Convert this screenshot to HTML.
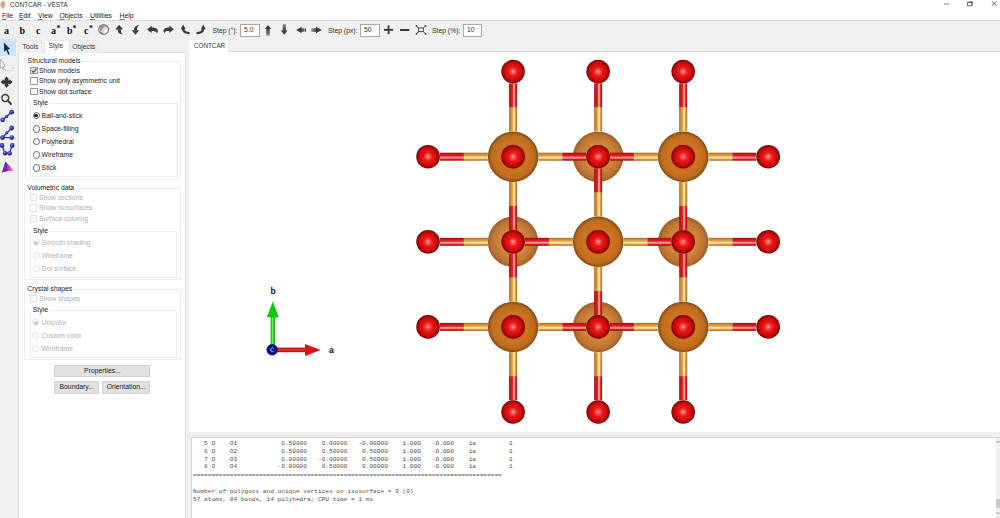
<!DOCTYPE html>
<html><head><meta charset="utf-8">
<style>
*{margin:0;padding:0;box-sizing:border-box}
html,body{width:1000px;height:518px;overflow:hidden;background:#f0f0f0;font-family:"Liberation Sans",sans-serif;color:#222}
.a{position:absolute;white-space:nowrap}
#title{left:0;top:0;width:1000px;height:10px;background:#fff}
#menu{left:0;top:10px;width:1000px;height:11px;background:#fff;border-bottom:1px solid #dadada}
.t{font-size:6.8px;line-height:8px}
.u{text-decoration:underline;text-decoration-thickness:0.6px;text-decoration-color:#777}
#tb{left:0;top:21px;width:1000px;height:18px;background:#f0f0f0}
.tl{font-family:"Liberation Serif",serif;font-weight:bold;font-size:10px;color:#111;line-height:10px}
.inp{background:#fff;border:1px solid #a8a8a8;font-size:6.8px;line-height:10px;padding-left:3px;color:#333}
#strip{left:0;top:39px;width:17px;height:479px;background:#f0f0f0}
#panel{left:17.5px;top:52px;width:168px;height:470px;background:#fff;border:1px solid #dedede}
.tab{top:40px;height:13px;background:#f0f0f0;border:1px solid #e8e8e8;border-bottom:none;font-size:6.8px;line-height:12px;text-align:center;color:#333}
.grp{border:1px solid #dcdcdc}
.cb{width:7px;height:7px;border:1px solid #555;background:#fff}
.rd{width:7px;height:7px;border:1px solid #444;border-radius:50%;background:#fff}
.dis,.pt.dis{color:#b0b0b0}
.cbd{border-color:#bdbdbd}
.btn{background:#e1e1e1;border:1px solid #d2d2d2;font-size:6.8px;line-height:10px;text-align:center;color:#222}
#view{left:190px;top:51px;width:810px;height:381px;background:#fff;border-top:1px solid #dadada}
#log{left:191px;top:437px;width:809px;height:81px;background:#fff;border-left:1px solid #d8d8d8;border-top:1px solid #d8d8d8}
.pt{font-size:6.8px;line-height:8px;color:#1a1a1a}
pre.a{white-space:pre}
pre{font-family:"Liberation Mono",monospace;font-size:6.13px;line-height:8px;color:#505050}
</style></head><body>
<div id="title" class="a"></div>
<div class="a t" style="left:10px;top:1px;font-size:6.4px;color:#333">CONTCAR - VESTA</div>

<div id="menu" class="a"></div>
<div class="a t" style="left:2px;top:12px"><span class="u">F</span>ile</div>
<div class="a t" style="left:19px;top:12px"><span class="u">E</span>dit</div>
<div class="a t" style="left:38px;top:12px"><span class="u">V</span>iew</div>
<div class="a t" style="left:59.5px;top:12px"><span class="u">O</span>bjects</div>
<div class="a t" style="left:90px;top:12px"><span class="u">U</span>tilities</div>
<div class="a t" style="left:119.5px;top:12px"><span class="u">H</span>elp</div>

<div id="tb" class="a"></div>
<div class="a tl" style="left:4px;top:26.2px">a</div>
<div class="a tl" style="left:19.5px;top:26.2px">b</div>
<div class="a tl" style="left:36px;top:26.2px">c</div>
<div class="a tl" style="left:51px;top:26.2px">a</div><div class="a tl" style="left:56.5px;top:24px;font-size:8px">*</div>
<div class="a tl" style="left:67px;top:26.2px">b</div><div class="a tl" style="left:72.5px;top:24px;font-size:8px">*</div>
<div class="a tl" style="left:84px;top:26.2px">c</div><div class="a tl" style="left:89px;top:24px;font-size:8px">*</div>

<div class="a t" style="left:212.5px;top:26.5px;color:#333">Step (°):</div>
<div class="a inp" style="left:240px;top:24px;width:20px;height:13px">5.0</div>
<div class="a t" style="left:328px;top:26.5px;color:#333">Step (px):</div>
<div class="a inp" style="left:360px;top:24px;width:20px;height:13px">50</div>
<div class="a t" style="left:432px;top:26.5px;color:#333">Step (%):</div>
<div class="a inp" style="left:463px;top:24px;width:19px;height:13px">10</div>

<div id="strip" class="a"></div>
<div class="a" style="left:0;top:39px;width:16px;height:17px;background:#cce4f7"></div>

<div id="panel" class="a"></div>
<div class="a tab" style="left:19px;width:23px">Tools</div>
<div class="a tab" style="left:43.5px;width:26.5px;top:39.5px;height:14px;background:#fff;line-height:10px;text-align:left;padding-left:4.3px;font-size:6.4px">Style</div>
<div class="a tab" style="left:70px;width:27.5px">Objects</div>

<div id="view" class="a"></div>
<div class="a" style="left:189px;top:39.5px;width:39px;height:12.5px;background:#fff;font-size:6.3px;line-height:12px;padding-left:5px;color:#333">CONTCAR</div>
<div id="log" class="a"></div>
<!--MOL--><svg class="a" style="left:0;top:0" width="1000" height="518" viewBox="0 0 1000 518">
<defs>
<radialGradient id="gO" cx="50%" cy="50%" r="50%">
<stop offset="0" stop-color="#ffb0b0"/><stop offset="0.15" stop-color="#ff5a5a"/><stop offset="0.38" stop-color="#ea1818"/><stop offset="0.7" stop-color="#d00c0c"/><stop offset="0.88" stop-color="#a80606"/><stop offset="1" stop-color="#700303"/></radialGradient>
<radialGradient id="gF" cx="50%" cy="50%" r="50%">
<stop offset="0" stop-color="#d07820"/><stop offset="0.42" stop-color="#b8661a"/><stop offset="0.55" stop-color="#cc7420"/><stop offset="0.85" stop-color="#c06c1e"/><stop offset="0.95" stop-color="#9a5618"/><stop offset="1" stop-color="#7a4818"/></radialGradient>
<radialGradient id="gB" cx="50%" cy="50%" r="50%">
<stop offset="0" stop-color="#d68c42"/><stop offset="0.55" stop-color="#cf843a"/><stop offset="0.85" stop-color="#bb7232"/><stop offset="1" stop-color="#9a5e28"/></radialGradient>
<linearGradient id="rH" x1="0" y1="0" x2="0" y2="1"><stop offset="0" stop-color="#a01010"/><stop offset="0.2" stop-color="#cc1616"/><stop offset="0.42" stop-color="#dc2424"/><stop offset="0.55" stop-color="#f49090"/><stop offset="0.68" stop-color="#f49090"/><stop offset="0.82" stop-color="#d41c1c"/><stop offset="1" stop-color="#a01010"/></linearGradient>
<linearGradient id="rV" x1="0" y1="0" x2="1" y2="0"><stop offset="0" stop-color="#a01010"/><stop offset="0.2" stop-color="#cc1616"/><stop offset="0.42" stop-color="#dc2424"/><stop offset="0.55" stop-color="#f49090"/><stop offset="0.68" stop-color="#f49090"/><stop offset="0.82" stop-color="#d41c1c"/><stop offset="1" stop-color="#a01010"/></linearGradient>
<linearGradient id="oH" x1="0" y1="0" x2="0" y2="1"><stop offset="0" stop-color="#a86a24"/><stop offset="0.2" stop-color="#cc8a34"/><stop offset="0.42" stop-color="#e4aa4c"/><stop offset="0.55" stop-color="#f8dc98"/><stop offset="0.68" stop-color="#f8dc98"/><stop offset="0.82" stop-color="#d89838"/><stop offset="1" stop-color="#a86a20"/></linearGradient>
<linearGradient id="oV" x1="0" y1="0" x2="1" y2="0"><stop offset="0" stop-color="#a86a24"/><stop offset="0.2" stop-color="#cc8a34"/><stop offset="0.42" stop-color="#e4aa4c"/><stop offset="0.55" stop-color="#f8dc98"/><stop offset="0.68" stop-color="#f8dc98"/><stop offset="0.82" stop-color="#d89838"/><stop offset="1" stop-color="#a86a20"/></linearGradient>
</defs>
<circle cx="598.13" cy="156.70" r="25.2" fill="url(#gB)"/>
<circle cx="513.09" cy="241.80" r="25.2" fill="url(#gB)"/>
<circle cx="683.17" cy="241.80" r="25.2" fill="url(#gB)"/>
<circle cx="598.13" cy="326.90" r="25.2" fill="url(#gB)"/>
<rect x="463.87" y="152.70" width="24.02" height="8.0" fill="url(#oH)"/>
<rect x="439.85" y="152.70" width="24.02" height="8.0" fill="url(#rH)"/>
<rect x="538.29" y="152.70" width="24.02" height="8.0" fill="url(#oH)"/>
<rect x="562.31" y="152.70" width="24.02" height="8.0" fill="url(#rH)"/>
<rect x="509.09" y="107.45" width="8.0" height="24.05" fill="url(#oV)"/>
<rect x="509.09" y="83.40" width="8.0" height="24.05" fill="url(#rV)"/>
<rect x="509.09" y="181.90" width="8.0" height="24.05" fill="url(#oV)"/>
<rect x="509.09" y="205.95" width="8.0" height="24.05" fill="url(#rV)"/>
<rect x="594.13" y="107.45" width="8.0" height="24.05" fill="url(#oV)"/>
<rect x="594.13" y="83.40" width="8.0" height="24.05" fill="url(#rV)"/>
<rect x="633.95" y="152.70" width="24.02" height="8.0" fill="url(#oH)"/>
<rect x="609.93" y="152.70" width="24.02" height="8.0" fill="url(#rH)"/>
<rect x="708.37" y="152.70" width="24.02" height="8.0" fill="url(#oH)"/>
<rect x="732.39" y="152.70" width="24.02" height="8.0" fill="url(#rH)"/>
<rect x="679.17" y="107.45" width="8.0" height="24.05" fill="url(#oV)"/>
<rect x="679.17" y="83.40" width="8.0" height="24.05" fill="url(#rV)"/>
<rect x="679.17" y="181.90" width="8.0" height="24.05" fill="url(#oV)"/>
<rect x="679.17" y="205.95" width="8.0" height="24.05" fill="url(#rV)"/>
<rect x="463.87" y="237.80" width="24.02" height="8.0" fill="url(#oH)"/>
<rect x="439.85" y="237.80" width="24.02" height="8.0" fill="url(#rH)"/>
<rect x="548.91" y="237.80" width="24.02" height="8.0" fill="url(#oH)"/>
<rect x="524.89" y="237.80" width="24.02" height="8.0" fill="url(#rH)"/>
<rect x="623.33" y="237.80" width="24.02" height="8.0" fill="url(#oH)"/>
<rect x="647.35" y="237.80" width="24.02" height="8.0" fill="url(#rH)"/>
<rect x="594.13" y="192.55" width="8.0" height="24.05" fill="url(#oV)"/>
<rect x="594.13" y="168.50" width="8.0" height="24.05" fill="url(#rV)"/>
<rect x="594.13" y="267.00" width="8.0" height="24.05" fill="url(#oV)"/>
<rect x="594.13" y="291.05" width="8.0" height="24.05" fill="url(#rV)"/>
<rect x="708.37" y="237.80" width="24.02" height="8.0" fill="url(#oH)"/>
<rect x="732.39" y="237.80" width="24.02" height="8.0" fill="url(#rH)"/>
<rect x="463.87" y="322.90" width="24.02" height="8.0" fill="url(#oH)"/>
<rect x="439.85" y="322.90" width="24.02" height="8.0" fill="url(#rH)"/>
<rect x="538.29" y="322.90" width="24.02" height="8.0" fill="url(#oH)"/>
<rect x="562.31" y="322.90" width="24.02" height="8.0" fill="url(#rH)"/>
<rect x="509.09" y="277.65" width="8.0" height="24.05" fill="url(#oV)"/>
<rect x="509.09" y="253.60" width="8.0" height="24.05" fill="url(#rV)"/>
<rect x="509.09" y="352.10" width="8.0" height="24.05" fill="url(#oV)"/>
<rect x="509.09" y="376.15" width="8.0" height="24.05" fill="url(#rV)"/>
<rect x="594.13" y="352.10" width="8.0" height="24.05" fill="url(#oV)"/>
<rect x="594.13" y="376.15" width="8.0" height="24.05" fill="url(#rV)"/>
<rect x="633.95" y="322.90" width="24.02" height="8.0" fill="url(#oH)"/>
<rect x="609.93" y="322.90" width="24.02" height="8.0" fill="url(#rH)"/>
<rect x="708.37" y="322.90" width="24.02" height="8.0" fill="url(#oH)"/>
<rect x="732.39" y="322.90" width="24.02" height="8.0" fill="url(#rH)"/>
<rect x="679.17" y="277.65" width="8.0" height="24.05" fill="url(#oV)"/>
<rect x="679.17" y="253.60" width="8.0" height="24.05" fill="url(#rV)"/>
<rect x="679.17" y="352.10" width="8.0" height="24.05" fill="url(#oV)"/>
<rect x="679.17" y="376.15" width="8.0" height="24.05" fill="url(#rV)"/>
<circle cx="513.09" cy="156.70" r="25.2" fill="url(#gF)"/>
<circle cx="683.17" cy="156.70" r="25.2" fill="url(#gF)"/>
<circle cx="598.13" cy="241.80" r="25.2" fill="url(#gF)"/>
<circle cx="513.09" cy="326.90" r="25.2" fill="url(#gF)"/>
<circle cx="683.17" cy="326.90" r="25.2" fill="url(#gF)"/>
<circle cx="513.09" cy="156.70" r="11.8" fill="url(#gO)"/>
<circle cx="598.13" cy="156.70" r="11.8" fill="url(#gO)"/>
<circle cx="683.17" cy="156.70" r="11.8" fill="url(#gO)"/>
<circle cx="513.09" cy="241.80" r="11.8" fill="url(#gO)"/>
<circle cx="598.13" cy="241.80" r="11.8" fill="url(#gO)"/>
<circle cx="683.17" cy="241.80" r="11.8" fill="url(#gO)"/>
<circle cx="513.09" cy="326.90" r="11.8" fill="url(#gO)"/>
<circle cx="598.13" cy="326.90" r="11.8" fill="url(#gO)"/>
<circle cx="683.17" cy="326.90" r="11.8" fill="url(#gO)"/>
<circle cx="428.05" cy="156.70" r="11.8" fill="url(#gO)"/>
<circle cx="428.05" cy="241.80" r="11.8" fill="url(#gO)"/>
<circle cx="428.05" cy="326.90" r="11.8" fill="url(#gO)"/>
<circle cx="768.21" cy="156.70" r="11.8" fill="url(#gO)"/>
<circle cx="768.21" cy="241.80" r="11.8" fill="url(#gO)"/>
<circle cx="768.21" cy="326.90" r="11.8" fill="url(#gO)"/>
<circle cx="513.09" cy="71.60" r="11.8" fill="url(#gO)"/>
<circle cx="598.13" cy="71.60" r="11.8" fill="url(#gO)"/>
<circle cx="683.17" cy="71.60" r="11.8" fill="url(#gO)"/>
<circle cx="513.09" cy="412.00" r="11.8" fill="url(#gO)"/>
<circle cx="598.13" cy="412.00" r="11.8" fill="url(#gO)"/>
<circle cx="683.17" cy="412.00" r="11.8" fill="url(#gO)"/>
</svg><!--/MOL-->
<!--PANEL--><div class="a" style="left:24.5px;top:60.5px;width:156.5px;height:119.0px;border:1px solid #ededed;border-radius:1px"></div>
<div class="a pt" style="left:26.6px;top:56.9px;background:#fff;padding:0 1px;color:#222">Structural models</div>
<div class="a" style="left:30.4px;top:66.7px;width:7.2px;height:7.2px;border:1px solid #9a9a9a;background:#e2e2e2"></div>
<svg class="a" style="left:30.4px;top:66.7px;overflow:visible" width="8" height="8" viewBox="0 0 8 8"><path d="M1.6,3.4 L3.4,5.3 L6.4,1.6" stroke="#505050" stroke-width="1.1" fill="none"/></svg>
<div class="a pt " style="left:39px;top:66.6px;">Show models</div>
<div class="a" style="left:30.4px;top:77.4px;width:7.2px;height:7.2px;border:1px solid #9a9a9a;background:#fff"></div>
<div class="a pt " style="left:39px;top:77.3px;">Show only asymmetric unit</div>
<div class="a" style="left:30.4px;top:87.8px;width:7.2px;height:7.2px;border:1px solid #9a9a9a;background:#fff"></div>
<div class="a pt " style="left:39px;top:87.7px;">Show dot surface</div>
<div class="a" style="left:29.5px;top:103px;width:148.0px;height:73.5px;border:1px solid #eaeaea;border-radius:1px"></div>
<div class="a pt" style="left:32px;top:99.1px;background:#fff;padding:0 1px;color:#222">Style</div>
<div class="a" style="left:32.6px;top:111.8px;width:7.2px;height:7.2px;border:1px solid #666;border-radius:50%;background:#fff"></div>
<div class="a" style="left:34.4px;top:113.6px;width:3.6px;height:3.6px;border-radius:50%;background:#222"></div>
<div class="a pt " style="left:41.6px;top:111.7px;">Ball-and-stick</div>
<div class="a" style="left:32.6px;top:125.4px;width:7.2px;height:7.2px;border:1px solid #666;border-radius:50%;background:#fff"></div>
<div class="a pt " style="left:41.6px;top:125.3px;">Space-filling</div>
<div class="a" style="left:32.6px;top:137.9px;width:7.2px;height:7.2px;border:1px solid #666;border-radius:50%;background:#fff"></div>
<div class="a pt " style="left:41.6px;top:137.8px;">Polyhedral</div>
<div class="a" style="left:32.6px;top:151.4px;width:7.2px;height:7.2px;border:1px solid #666;border-radius:50%;background:#fff"></div>
<div class="a pt " style="left:41.6px;top:151.3px;">Wireframe</div>
<div class="a" style="left:32.6px;top:164.4px;width:7.2px;height:7.2px;border:1px solid #666;border-radius:50%;background:#fff"></div>
<div class="a pt " style="left:41.6px;top:164.3px;">Stick</div>
<div class="a" style="left:24px;top:188px;width:157px;height:92px;border:1px solid #ededed;border-radius:1px"></div>
<div class="a pt" style="left:26.3px;top:184.2px;background:#fff;padding:0 1px;color:#222">Volumetric data</div>
<div class="a" style="left:30.1px;top:193.8px;width:7.2px;height:7.2px;border:1px solid #e2e2e2;background:#fff"></div>
<div class="a pt dis" style="left:39px;top:193.7px;">Show sections</div>
<div class="a" style="left:30.1px;top:204.4px;width:7.2px;height:7.2px;border:1px solid #e2e2e2;background:#fff"></div>
<div class="a pt dis" style="left:39px;top:204.3px;">Show isosurfaces</div>
<div class="a" style="left:30.1px;top:215.0px;width:7.2px;height:7.2px;border:1px solid #e2e2e2;background:#fff"></div>
<div class="a pt dis" style="left:39px;top:214.9px;">Surface coloring</div>
<div class="a" style="left:29.5px;top:230.7px;width:147.5px;height:47.30000000000001px;border:1px solid #ededed;border-radius:1px"></div>
<div class="a pt" style="left:32px;top:226.8px;background:#fff;padding:0 1px;color:#222">Style</div>
<div class="a" style="left:32.6px;top:239.2px;width:7.2px;height:7.2px;border:1px solid #e2e2e2;border-radius:50%;background:#fff"></div>
<div class="a" style="left:34.4px;top:241.0px;width:3.6px;height:3.6px;border-radius:50%;background:#d0d0d0"></div>
<div class="a pt dis" style="left:41.5px;top:239.1px;">Smooth shading</div>
<div class="a" style="left:32.6px;top:252.2px;width:7.2px;height:7.2px;border:1px solid #e2e2e2;border-radius:50%;background:#fff"></div>
<div class="a pt dis" style="left:41.5px;top:252.1px;">Wireframe</div>
<div class="a" style="left:32.6px;top:265.1px;width:7.2px;height:7.2px;border:1px solid #e2e2e2;border-radius:50%;background:#fff"></div>
<div class="a pt dis" style="left:41.5px;top:265.0px;">Dot surface</div>
<div class="a" style="left:24px;top:289px;width:157px;height:71px;border:1px solid #ededed;border-radius:1px"></div>
<div class="a pt" style="left:26.3px;top:285.1px;background:#fff;padding:0 1px;color:#222">Crystal shapes</div>
<div class="a" style="left:29.9px;top:294.9px;width:7.2px;height:7.2px;border:1px solid #e2e2e2;background:#fff"></div>
<div class="a pt dis" style="left:39.3px;top:294.8px;">Show shapes</div>
<div class="a" style="left:29.5px;top:310.2px;width:147.5px;height:47.60000000000002px;border:1px solid #ededed;border-radius:1px"></div>
<div class="a pt" style="left:31.799999999999997px;top:306.3px;background:#fff;padding:0 1px;color:#222">Style</div>
<div class="a" style="left:32.2px;top:319.3px;width:7.2px;height:7.2px;border:1px solid #e2e2e2;border-radius:50%;background:#fff"></div>
<div class="a" style="left:34.0px;top:321.1px;width:3.6px;height:3.6px;border-radius:50%;background:#d0d0d0"></div>
<div class="a pt dis" style="left:41.6px;top:319.2px;">Unicolor</div>
<div class="a" style="left:32.2px;top:332.0px;width:7.2px;height:7.2px;border:1px solid #e2e2e2;border-radius:50%;background:#fff"></div>
<div class="a pt dis" style="left:41.6px;top:331.9px;">Custom color</div>
<div class="a" style="left:32.2px;top:345.2px;width:7.2px;height:7.2px;border:1px solid #e2e2e2;border-radius:50%;background:#fff"></div>
<div class="a pt dis" style="left:41.6px;top:345.1px;">Wireframe</div>
<div class="a btn" style="left:54.4px;top:365.2px;width:96.1px;height:11.800000000000011px;line-height:9.800000000000011px">Properties...</div>
<div class="a btn" style="left:54.4px;top:381.2px;width:44.6px;height:12.400000000000034px;line-height:10.400000000000034px">Boundary...</div>
<div class="a btn" style="left:101.9px;top:381.2px;width:48.599999999999994px;height:12.400000000000034px;line-height:10.400000000000034px">Orientation...</div><!--/PANEL-->
<!--ICONS--><svg class="a" style="left:0;top:0" width="500" height="180" viewBox="0 0 500 180">
<defs><radialGradient id="bb" cx="40%" cy="35%" r="60%"><stop offset="0" stop-color="#8c8cf0"/><stop offset="0.5" stop-color="#3a3ac0"/><stop offset="1" stop-color="#1e1e80"/></radialGradient>
<linearGradient id="shU" x1="0" y1="0" x2="0" y2="1"><stop offset="0" stop-color="#3a3a3a"/><stop offset="1" stop-color="#8a8a8a"/></linearGradient>
<linearGradient id="shD" x1="0" y1="1" x2="0" y2="0"><stop offset="0" stop-color="#3a3a3a"/><stop offset="1" stop-color="#8a8a8a"/></linearGradient>
<linearGradient id="shL" x1="0" y1="0" x2="1" y2="0"><stop offset="0" stop-color="#3a3a3a"/><stop offset="1" stop-color="#9a9a9a"/></linearGradient>
<linearGradient id="shR" x1="1" y1="0" x2="0" y2="0"><stop offset="0" stop-color="#3a3a3a"/><stop offset="1" stop-color="#9a9a9a"/></linearGradient>
<linearGradient id="pm" x1="0" y1="0" x2="1" y2="1"><stop offset="0" stop-color="#3030a0"/><stop offset="0.5" stop-color="#c030c0"/><stop offset="1" stop-color="#ff70c0"/></linearGradient>
</defs>
<g fill="#3c3c3c">
<!-- globe -->
<circle cx="103.6" cy="29.5" r="4.9" fill="#d6d6d6" stroke="#777" stroke-width="1.1"/>
<path d="M100.5,27 C101.5,25.5 104,25.2 105.5,26.3 C104.5,27.5 103,27 102.5,28.5 C102,30 101,31.5 100,30.5 Z" fill="#8a8a8a"/>
<path d="M104.5,29 C106,28.5 107.8,29.5 107.5,31 C106.5,32.5 105.5,33.5 104,33.8 C104.5,32 103.8,30 104.5,29 Z" fill="#f2f2f2"/>
<path d="M100,31.5 C101.5,32 102.5,33 103,34 C101.5,34 100.5,33 100,31.5 Z" fill="#666"/>
<!-- up curl -->
<path d="M115.2,29.6 L119.25,24.8 L123.1,29.6 Z"/>
<path d="M117.7,29.3 C117.5,32.2 119.2,34.4 122.9,34.4 C121.2,33.4 120.7,31.5 120.8,29.3 Z"/>
<!-- down curl -->
<path d="M131.75,30.3 L139.2,30.3 L135.5,34.7 Z"/>
<path d="M134,30.6 C133.9,27.6 135.6,25.3 139,25.3 C137.3,26.3 136.9,28.4 137,30.6 Z"/>
<!-- undo -->
<path d="M147,29.4 L151.7,25.8 L151.7,27.6 C155.2,27.4 158.1,28.7 157.9,31.6 L156.9,33.4 C156.6,31.6 154.6,30.9 151.7,31.1 L151.7,32.9 Z"/>
<!-- redo -->
<path d="M173.8,29.3 L169.3,25.5 L169.3,27.4 C165.9,27.3 163.3,28.6 163.5,31.4 L164.4,33.1 C164.8,31.4 166.6,30.8 169.3,31 L169.3,32.9 Z"/>
<!-- ccw -->
<path d="M180.7,29.2 L183.1,24.6 L185.6,29.2 Z"/>
<path d="M183.1,28.6 C183.1,31.6 185.4,33.1 189.6,33.1" fill="none" stroke="#3c3c3c" stroke-width="2.3"/>
<!-- cw -->
<path d="M200.8,29.2 L203.2,24.6 L205.7,29.2 Z"/>
<path d="M203.2,28.6 C203.2,31.6 200.9,33.1 196.6,33.1" fill="none" stroke="#3c3c3c" stroke-width="2.3"/>
<!-- straight up -->
<path d="M264.8,28.9 L268,25 L271.3,28.9 Z"/>
<rect x="266.3" y="28.5" width="3.4" height="7.1" fill="url(#shU)"/>
<!-- straight down -->
<rect x="282.7" y="24.2" width="3.2" height="6.8" fill="url(#shD)"/>
<path d="M280.8,30.6 L287.6,30.6 L284.3,34.7 Z"/>
<!-- left -->
<path d="M296.2,30 L301.6,26.8 L301.6,33.2 Z"/>
<rect x="301.2" y="28.3" width="1.6" height="3.5"/>
<rect x="303.2" y="28.3" width="1.1" height="3.5"/>
<rect x="304.9" y="28.3" width="1.1" height="3.5"/>
<!-- right -->
<rect x="311.2" y="28.3" width="5.2" height="3.5" fill="url(#shR)"/>
<path d="M321.8,30 L316,26.8 L316,33.2 Z"/>
<!-- plus minus -->
<rect x="384" y="28.9" width="9.2" height="1.9"/>
<rect x="387.6" y="25.4" width="1.9" height="8.8"/>
<rect x="400" y="29" width="9.3" height="1.9" rx="0.5"/>
<!-- fit -->
<rect x="418.5" y="28" width="4.8" height="3.6" fill="none" stroke="#3c3c3c" stroke-width="0.9"/>
<path d="M416.5,25.8 L418.8,28.2 M425.5,25.8 L423.2,28.2 M416.5,33.8 L418.8,31.4 M425.5,33.8 L423.2,31.4" stroke="#3c3c3c" stroke-width="0.9"/>
<circle cx="416.5" cy="25.8" r="0.9"/><circle cx="425.5" cy="25.8" r="0.9"/><circle cx="416.5" cy="33.8" r="0.9"/><circle cx="425.5" cy="33.8" r="0.9"/>
</g>
<!-- left strip -->
<path d="M3.8,42.5 L4.2,52 L6.3,49.9 L8.3,54.7 L9.7,54.1 L7.7,49.4 L10.2,49.1 Z" fill="#1c2c3e"/>
<path d="M0.3,59 L0.3,68.5 L2,67 L3.2,70 L4.2,69.5 L3,66.6 L5.3,66.4 Z" fill="#fafafa" stroke="#9a9a9a" stroke-width="0.7"/>
<path d="M5,70.5 L13,70.5 M13,70.5 L13,66" stroke="#b0b0b0" stroke-width="0.8" stroke-dasharray="1,1" fill="none"/>
<g fill="#333">
<path d="M6.6,76.4 L9.3,79.4 L8,79.4 L8,80.6 L9.6,80.6 L9.6,79.3 L12.6,82 L9.6,84.8 L9.6,83.4 L8,83.4 L8,84.8 L9.3,84.8 L6.6,87.8 L3.9,84.8 L5.2,84.8 L5.2,83.4 L3.6,83.4 L3.6,84.8 L0.6,82 L3.6,79.3 L3.6,80.6 L5.2,80.6 L5.2,79.4 L3.9,79.4 Z"/><circle cx="6.6" cy="82" r="2.6"/></g>
<circle cx="5.3" cy="98" r="3.4" fill="none" stroke="#3c3c3c" stroke-width="1.5"/>
<path d="M7.8,100.5 L11,104" stroke="#3c3c3c" stroke-width="1.9" stroke-linecap="round"/>
<g stroke="#3a3ab0" stroke-width="1.4" fill="none">
<path d="M2.5,120 L11.5,112.2"/>
<path d="M2.5,137.6 L11.8,128 M2.5,137.6 L11.8,137.6"/>
<path d="M2,145.5 L5,153 L9.5,153 L12.2,145.5"/>
</g>
<g fill="url(#bb)">
<circle cx="2.6" cy="119.8" r="2.4"/><circle cx="6.6" cy="116.4" r="1.7"/><circle cx="11.6" cy="112.2" r="2.4"/>
<circle cx="11.6" cy="128" r="2.4"/><circle cx="2.5" cy="137.6" r="2.4"/><circle cx="11.8" cy="137.6" r="2.4"/><circle cx="6.8" cy="132.7" r="1.5"/>
<circle cx="2" cy="145.4" r="2.3"/><circle cx="5.1" cy="153.2" r="2.3"/><circle cx="9.6" cy="153.2" r="2.3"/><circle cx="12.2" cy="145.4" r="2.3"/>
</g>
<path d="M5.5,161.5 L2,172.5 L8,171 L13.5,170.5 L9.5,166 Z" fill="url(#pm)"/>
<path d="M5.5,161.5 L8,171 L2,172.5 Z" fill="#5a2ab0" opacity="0.8"/>
</svg>
<!--/ICONS-->
<!--LOG--><pre class="a" style="left:193px;top:440.3px">   5 O    O1            0.50000    0.00000   -0.00000    1.000   -0.000    1a         1</pre>
<pre class="a" style="left:193px;top:448.0px">   6 O    O2            0.50000    0.50000    0.50000    1.000   -0.000    1a         1</pre>
<pre class="a" style="left:193px;top:455.7px">   7 O    O3            0.00000   -0.00000    0.50000    1.000   -0.000    1a         1</pre>
<pre class="a" style="left:193px;top:463.4px">   8 O    O4           -0.00000    0.50000    0.00000    1.000   -0.000    1a         1</pre>
<pre class="a" style="left:193px;top:472.3px">====================================================================================</pre>
<pre class="a" style="left:193px;top:487.8px">Number of polygons and unique vertices on isosurface = 0 (0)</pre>
<pre class="a" style="left:193px;top:495.5px">57 atoms, 84 bonds, 14 polyhedra; CPU time = 1 ms</pre>
<div class="a" style="left:996px;top:438px;width:4px;height:80px;background:#f0f0f0"></div>
<div class="a" style="left:996px;top:499px;width:4px;height:9px;background:#c8c8c8"></div>
<svg class="a scrarrow" style="left:995px;top:438px" width="5" height="80" viewBox="0 0 5 80"><path d="M1.5,5 L3.5,3 L5,4.5" fill="none" stroke="#777" stroke-width="0.8"/><path d="M1.5,74 L3.5,76 L5,74.5" fill="none" stroke="#777" stroke-width="0.8"/></svg><!--/LOG-->
<!--AXES--><svg class="a" style="left:250px;top:280px" width="100" height="90" viewBox="250 280 100 90">
<rect x="270.6" y="316" width="4.4" height="34" fill="#10c010"/>
<rect x="271.8" y="316" width="1.6" height="34" fill="#60f060"/>
<path d="M266.8,317.2 L272.8,301.3 L278.8,317.2 Z" fill="#10c810"/>
<rect x="277" y="347.6" width="28.5" height="4.6" fill="#c41010"/>
<rect x="277" y="348.9" width="28.5" height="1.8" fill="#e03030"/>
<path d="M305,344 L320.7,350 L305,355.9 Z" fill="#e01010"/>
<circle cx="272.2" cy="349.8" r="5.7" fill="#10108a"/>
<path d="M273.6,348.4 A1.8,1.8 0 1 0 273.6,351.2" fill="none" stroke="#c0c8f0" stroke-width="0.9"/>
<text x="273" y="293.6" font-family="Liberation Sans" font-weight="bold" font-size="8.5" text-anchor="middle" fill="#111">b</text>
<text x="331.4" y="352.5" font-family="Liberation Sans" font-weight="bold" font-size="8.5" text-anchor="middle" fill="#111">a</text>
</svg>
<!--/AXES-->
<!--CHROME--><svg class="a" style="left:0;top:0" width="1000" height="10" viewBox="0 0 1000 10">
<path d="M1,2 C2,0.5 4,0.5 5,2 L5.5,5 L4,8.5 L1.5,8.5 L0,5 Z" fill="#d8a070" opacity="0.8"/>
<path d="M1.5,3.5 L4.5,3.5 M2,5.5 L4,5.5" stroke="#a06a40" stroke-width="0.6"/>
<rect x="944" y="3.6" width="5.2" height="0.9" fill="#777"/>
<rect x="967.6" y="2.4" width="4.2" height="3.4" fill="none" stroke="#555" stroke-width="0.9"/>
<path d="M968.8,1.8 L972.6,1.8 L972.6,4.8" fill="none" stroke="#555" stroke-width="0.8"/>
<path d="M991.8,1.2 L996.6,5.8 M996.6,1.2 L991.8,5.8" stroke="#444" stroke-width="0.8"/>
</svg>
<!--/CHROME-->
</body></html>
